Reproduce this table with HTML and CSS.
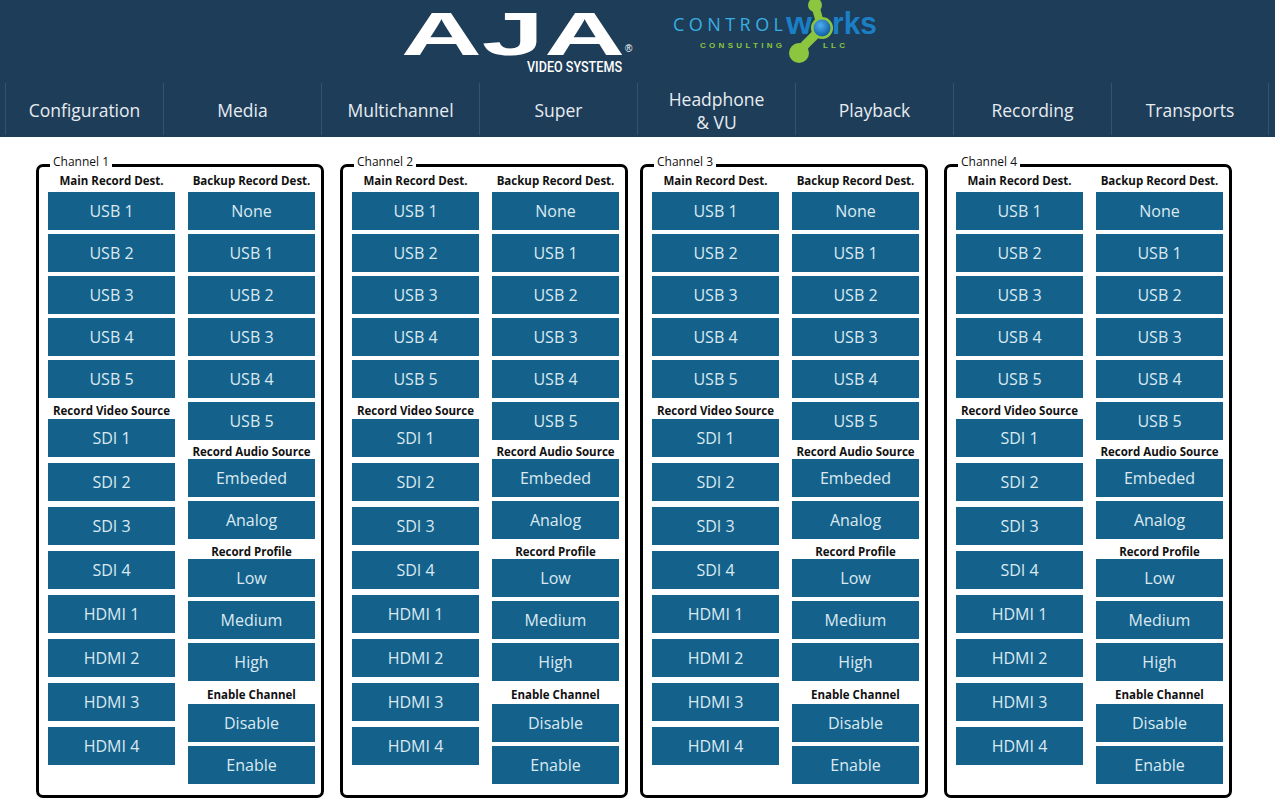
FILE: index.html
```html
<!DOCTYPE html>
<html>
<head>
<meta charset="utf-8">
<link rel="stylesheet" href="styles.css">
</head>
<body>
<header class="header">
  <div class="brand">
    <svg class="logo-aja" width="240" height="82" viewBox="0 0 240 82">
      <text x="3" y="55" class="aja-word" textLength="224" lengthAdjust="spacingAndGlyphs">AJA</text>
      <text x="227" y="52" class="aja-reg">®</text>
      <text x="129" y="72" class="aja-sub" textLength="95" lengthAdjust="spacingAndGlyphs">VIDEO SYSTEMS</text>
    </svg>
    <svg class="logo-cw" width="215" height="70" viewBox="0 0 215 70">
      <defs>
        <radialGradient id="ball" cx="0.4" cy="0.35" r="0.7">
          <stop offset="0" stop-color="#4fb0ee"/>
          <stop offset="1" stop-color="#0c58a4"/>
        </radialGradient>
      </defs>
      <line x1="147" y1="5" x2="153" y2="26" stroke="#8cc63f" stroke-width="8" stroke-linecap="round"/>
      <line x1="152" y1="30" x2="131" y2="51" stroke="#8cc63f" stroke-width="9" stroke-linecap="round"/>
      <circle cx="147" cy="5" r="7" fill="#8cc63f"/>
      <circle cx="131" cy="53" r="10" fill="#8cc63f"/>
      <circle cx="154" cy="28" r="11" fill="#8cc63f"/>
      <circle cx="154" cy="28" r="8.5" fill="url(#ball)"/>
      <text x="5" y="31" class="cw-control" textLength="110" lengthAdjust="spacing">CONTROL</text>
      <text x="118" y="34" class="cw-works" textLength="26" lengthAdjust="spacingAndGlyphs">w</text>
      <text x="164" y="34" class="cw-works" textLength="45" lengthAdjust="spacingAndGlyphs">rks</text>
      <text x="32" y="48" class="cw-sub" textLength="82" lengthAdjust="spacing">CONSULTING</text>
      <text x="155" y="48" class="cw-sub" textLength="22" lengthAdjust="spacing">LLC</text>
    </svg>
  </div>
  <nav class="nav">
    <div class="nav-item">Configuration</div>
    <div class="nav-item">Media</div>
    <div class="nav-item">Multichannel</div>
    <div class="nav-item">Super</div>
    <div class="nav-item">Headphone<br>&amp; VU</div>
    <div class="nav-item">Playback</div>
    <div class="nav-item">Recording</div>
    <div class="nav-item nav-last">Transports</div>
  </nav>
</header>

<main class="channels">
  <section class="panel">
    <span class="legend">Channel 1</span>
    <div class="col">
      <div class="lbl lbl-head">Main Record Dest.</div>
      <div class="stack">
        <div class="btn">USB 1</div><div class="btn">USB 2</div><div class="btn">USB 3</div><div class="btn">USB 4</div><div class="btn">USB 5</div>
      </div>
      <div class="lbl lbl-video">Record Video Source</div>
      <div class="stack loose">
        <div class="btn">SDI 1</div><div class="btn">SDI 2</div><div class="btn">SDI 3</div><div class="btn">SDI 4</div>
        <div class="btn">HDMI 1</div><div class="btn">HDMI 2</div><div class="btn">HDMI 3</div><div class="btn">HDMI 4</div>
      </div>
    </div>
    <div class="col">
      <div class="lbl lbl-head">Backup Record Dest.</div>
      <div class="stack">
        <div class="btn">None</div><div class="btn">USB 1</div><div class="btn">USB 2</div><div class="btn">USB 3</div><div class="btn">USB 4</div><div class="btn">USB 5</div>
      </div>
      <div class="lbl lbl-audio">Record Audio Source</div>
      <div class="stack"><div class="btn">Embeded</div><div class="btn">Analog</div></div>
      <div class="lbl lbl-profile">Record Profile</div>
      <div class="stack"><div class="btn">Low</div><div class="btn">Medium</div><div class="btn">High</div></div>
      <div class="lbl lbl-enable">Enable Channel</div>
      <div class="stack"><div class="btn">Disable</div><div class="btn">Enable</div></div>
    </div>
  </section>

  <section class="panel">
    <span class="legend">Channel 2</span>
    <div class="col">
      <div class="lbl lbl-head">Main Record Dest.</div>
      <div class="stack">
        <div class="btn">USB 1</div><div class="btn">USB 2</div><div class="btn">USB 3</div><div class="btn">USB 4</div><div class="btn">USB 5</div>
      </div>
      <div class="lbl lbl-video">Record Video Source</div>
      <div class="stack loose">
        <div class="btn">SDI 1</div><div class="btn">SDI 2</div><div class="btn">SDI 3</div><div class="btn">SDI 4</div>
        <div class="btn">HDMI 1</div><div class="btn">HDMI 2</div><div class="btn">HDMI 3</div><div class="btn">HDMI 4</div>
      </div>
    </div>
    <div class="col">
      <div class="lbl lbl-head">Backup Record Dest.</div>
      <div class="stack">
        <div class="btn">None</div><div class="btn">USB 1</div><div class="btn">USB 2</div><div class="btn">USB 3</div><div class="btn">USB 4</div><div class="btn">USB 5</div>
      </div>
      <div class="lbl lbl-audio">Record Audio Source</div>
      <div class="stack"><div class="btn">Embeded</div><div class="btn">Analog</div></div>
      <div class="lbl lbl-profile">Record Profile</div>
      <div class="stack"><div class="btn">Low</div><div class="btn">Medium</div><div class="btn">High</div></div>
      <div class="lbl lbl-enable">Enable Channel</div>
      <div class="stack"><div class="btn">Disable</div><div class="btn">Enable</div></div>
    </div>
  </section>

  <section class="panel panel-tight">
    <span class="legend">Channel 3</span>
    <div class="col">
      <div class="lbl lbl-head">Main Record Dest.</div>
      <div class="stack">
        <div class="btn">USB 1</div><div class="btn">USB 2</div><div class="btn">USB 3</div><div class="btn">USB 4</div><div class="btn">USB 5</div>
      </div>
      <div class="lbl lbl-video">Record Video Source</div>
      <div class="stack loose">
        <div class="btn">SDI 1</div><div class="btn">SDI 2</div><div class="btn">SDI 3</div><div class="btn">SDI 4</div>
        <div class="btn">HDMI 1</div><div class="btn">HDMI 2</div><div class="btn">HDMI 3</div><div class="btn">HDMI 4</div>
      </div>
    </div>
    <div class="col">
      <div class="lbl lbl-head">Backup Record Dest.</div>
      <div class="stack">
        <div class="btn">None</div><div class="btn">USB 1</div><div class="btn">USB 2</div><div class="btn">USB 3</div><div class="btn">USB 4</div><div class="btn">USB 5</div>
      </div>
      <div class="lbl lbl-audio">Record Audio Source</div>
      <div class="stack"><div class="btn">Embeded</div><div class="btn">Analog</div></div>
      <div class="lbl lbl-profile">Record Profile</div>
      <div class="stack"><div class="btn">Low</div><div class="btn">Medium</div><div class="btn">High</div></div>
      <div class="lbl lbl-enable">Enable Channel</div>
      <div class="stack"><div class="btn">Disable</div><div class="btn">Enable</div></div>
    </div>
  </section>

  <section class="panel">
    <span class="legend">Channel 4</span>
    <div class="col">
      <div class="lbl lbl-head">Main Record Dest.</div>
      <div class="stack">
        <div class="btn">USB 1</div><div class="btn">USB 2</div><div class="btn">USB 3</div><div class="btn">USB 4</div><div class="btn">USB 5</div>
      </div>
      <div class="lbl lbl-video">Record Video Source</div>
      <div class="stack loose">
        <div class="btn">SDI 1</div><div class="btn">SDI 2</div><div class="btn">SDI 3</div><div class="btn">SDI 4</div>
        <div class="btn">HDMI 1</div><div class="btn">HDMI 2</div><div class="btn">HDMI 3</div><div class="btn">HDMI 4</div>
      </div>
    </div>
    <div class="col">
      <div class="lbl lbl-head">Backup Record Dest.</div>
      <div class="stack">
        <div class="btn">None</div><div class="btn">USB 1</div><div class="btn">USB 2</div><div class="btn">USB 3</div><div class="btn">USB 4</div><div class="btn">USB 5</div>
      </div>
      <div class="lbl lbl-audio">Record Audio Source</div>
      <div class="stack"><div class="btn">Embeded</div><div class="btn">Analog</div></div>
      <div class="lbl lbl-profile">Record Profile</div>
      <div class="stack"><div class="btn">Low</div><div class="btn">Medium</div><div class="btn">High</div></div>
      <div class="lbl lbl-enable">Enable Channel</div>
      <div class="stack"><div class="btn">Disable</div><div class="btn">Enable</div></div>
    </div>
  </section>
</main>
</body>
</html>
```

FILE: styles.css
```css
html, body {
  margin: 0;
  padding: 0;
  background: #ffffff;
}
body {
  width: 1280px;
  height: 800px;
  overflow: hidden;
  font-family: "Open Sans", "Noto Sans", sans-serif;
  color: #111111;
}

.header {
  width: 1275px;
  height: 137px;
  background: #1e3d59;
}

.brand {
  height: 82px;
  display: flex;
  align-items: flex-start;
  padding-left: 398px;
  gap: 30px;
}
.logo-aja, .logo-cw {
  display: block;
  overflow: visible;
}

.aja-word {
  font-family: "Liberation Sans", "DejaVu Sans", sans-serif;
  font-weight: 700;
  font-size: 62px;
  fill: #ffffff;
}
.aja-reg {
  font-family: "Liberation Sans", sans-serif;
  font-size: 10px;
  fill: #ffffff;
}
.aja-sub {
  font-family: Roboto, "Liberation Sans", sans-serif;
  font-weight: 500;
  font-size: 14px;
  fill: #ffffff;
}
.cw-control {
  font-family: "Open Sans", "Liberation Sans", sans-serif;
  font-size: 18px;
  fill: #3aaee2;
}
.cw-works {
  font-family: "Liberation Sans", sans-serif;
  font-weight: 700;
  font-size: 31px;
  fill: #1b7fc5;
}
.cw-sub {
  font-family: "Liberation Sans", sans-serif;
  font-weight: 700;
  font-size: 8px;
  fill: #8cc63f;
}

.nav {
  display: flex;
  height: 55px;
  padding-left: 5px;
}
.nav-item {
  width: 158px;
  box-sizing: border-box;
  margin: 1px 0 2px;
  border-left: 1px solid #34536e;
  display: flex;
  align-items: center;
  justify-content: center;
  text-align: center;
  color: #e6ecf1;
  font-size: 17.5px;
  line-height: 23px;
  padding-top: 3px;
}
.nav-last {
  border-right: 1px solid #34536e;
}

.channels {
  display: flex;
  gap: 16px;
  padding: 27px 0 0 36px;
}
.panel {
  position: relative;
  width: 288px;
  height: 634px;
  box-sizing: border-box;
  border: 3px solid #000000;
  border-radius: 7px;
  padding: 3px 0 0 9px;
  display: flex;
  gap: 13px;
}
.panel-tight {
  margin-left: -4px;
}
.legend {
  position: absolute;
  top: -12px;
  left: 11px;
  padding: 0 3px;
  background: #ffffff;
  font-size: 12px;
  line-height: 14px;
  color: #111111;
}

.col {
  width: 127px;
  display: flex;
  flex-direction: column;
}
.lbl {
  display: flex;
  align-items: center;
  justify-content: center;
  box-sizing: border-box;
  font-weight: 700;
  font-size: 11.5px;
  white-space: nowrap;
  color: #111111;
}
.lbl-head { height: 22px; padding-bottom: 1px; }
.lbl-video { height: 21px; padding-top: 4px; }
.lbl-audio { height: 19px; padding-top: 3px; }
.lbl-profile { height: 20px; padding-top: 4px; }
.lbl-enable { height: 23px; padding-top: 4px; }

.stack {
  display: flex;
  flex-direction: column;
  gap: 4px;
}
.stack.loose {
  gap: 6px;
}
.btn {
  height: 38px;
  background: #14628c;
  color: #dce9f1;
  font-size: 16px;
  display: flex;
  align-items: center;
  justify-content: center;
}
```
